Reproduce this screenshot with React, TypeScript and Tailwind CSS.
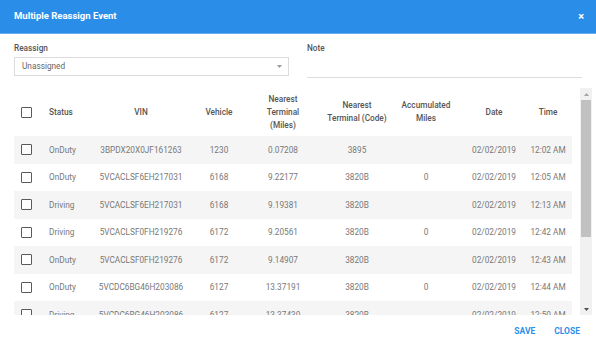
import React from "react";

type Row = {
  status: string;
  vin: string;
  vehicle: string;
  miles: string;
  code: string;
  acc: string;
  date: string;
  time: string;
};

const rows: Row[] = [
  { status: "OnDuty", vin: "3BPDX20X0JF161263", vehicle: "1230", miles: "0.07208", code: "3895", acc: "", date: "02/02/2019", time: "12:02 AM" },
  { status: "OnDuty", vin: "5VCACLSF6EH217031", vehicle: "6168", miles: "9.22177", code: "3820B", acc: "0", date: "02/02/2019", time: "12:05 AM" },
  { status: "Driving", vin: "5VCACLSF6EH217031", vehicle: "6168", miles: "9.19381", code: "3820B", acc: "", date: "02/02/2019", time: "12:13 AM" },
  { status: "Driving", vin: "5VCACLSF0FH219276", vehicle: "6172", miles: "9.20561", code: "3820B", acc: "0", date: "02/02/2019", time: "12:42 AM" },
  { status: "OnDuty", vin: "5VCACLSF0FH219276", vehicle: "6172", miles: "9.14907", code: "3820B", acc: "", date: "02/02/2019", time: "12:43 AM" },
  { status: "OnDuty", vin: "5VCDC6BG46H203086", vehicle: "6127", miles: "13.37191", code: "3820B", acc: "0", date: "02/02/2019", time: "12:44 AM" },
  { status: "Driving", vin: "5VCDC6BG46H203086", vehicle: "6127", miles: "13.37430", code: "3820B", acc: "", date: "02/02/2019", time: "12:50 AM" },
];

function Checkbox() {
  return <div className="w-[11px] h-[11px] border-[1.5px] border-[#5a5a5a] rounded-[1px] bg-white" />;
}

function Cells({ r, header }: { r?: Row; header?: boolean }) {
  const c = "flex justify-center items-center whitespace-nowrap";
  return (
    <>
      <div className="w-[24px] flex justify-center items-center">
        <Checkbox />
      </div>
      <div className="w-[58px] pl-[11px] flex items-center whitespace-nowrap">{header ? "Status" : r!.status}</div>
      <div className={`w-[90px] ${c}`}>{header ? "VIN" : r!.vin}</div>
      <div className={`w-[66px] ${c}`}>{header ? "Vehicle" : r!.vehicle}</div>
      <div className={`w-[62px] ${c}`}>
        {header ? (
          <div className="text-center leading-[13px]">
            Nearest
            <br />
            Terminal
            <br />
            (Miles)
          </div>
        ) : (
          r!.miles
        )}
      </div>
      <div className={`w-[86px] ${c}`}>
        {header ? (
          <div className="text-center leading-[13px]">
            Nearest
            <br />
            Terminal (Code)
          </div>
        ) : (
          r!.code
        )}
      </div>
      <div className={`w-[52px] ${c}`}>
        {header ? (
          <div className="text-center leading-[13px]">
            Accumulated
            <br />
            Miles
          </div>
        ) : (
          r!.acc
        )}
      </div>
      <div className={`w-[84px] ${c}`}>{header ? "Date" : r!.date}</div>
      <div className={`w-[24px] ${c}`}>{header ? "Time" : r!.time}</div>
    </>
  );
}

export default function App() {
  return (
    <div
      className="w-[596px] h-[348px] bg-white flex flex-col overflow-hidden"
      style={{ fontFamily: "Roboto, 'Noto Sans', sans-serif" }}
    >
      <div className="h-[34px] bg-[#2a8ee8] border-b border-[#64adf0] flex items-center justify-between pl-[14px] pr-[12px]">
        <span className="text-white font-bold text-[9.5px]">Multiple Reassign Event</span>
        <span className="text-white font-bold text-[11px] leading-none">×</span>
      </div>

      <div className="grid grid-cols-2 gap-[18px] px-[14px] pt-[8px]">
        <div className="flex flex-col">
          <div className="text-[8.25px] font-medium text-[#555] leading-[12px]">Reassign</div>
          <div className="mt-[3px] h-[19px] border border-[#dcdcdc] flex items-center justify-between pl-[7px] pr-[6px]">
            <span className="text-[8.25px] text-[#666]">Unassigned</span>
            <svg width="5" height="3" viewBox="0 0 5 3">
              <path d="M0 0 L5 0 L2.5 3 Z" fill="#999" />
            </svg>
          </div>
        </div>
        <div className="flex flex-col">
          <div className="text-[8.25px] font-medium text-[#555] leading-[12px]">Note</div>
          <div className="mt-[3px] h-[21px] border-b border-[#dcdcdc]" />
        </div>
      </div>

      <div className="mt-[10px] h-[227px] flex pl-[14px] pr-[4px] overflow-hidden">
        <div className="w-[558px] flex flex-col text-[8.25px]">
          <div className="h-[48px] shrink-0 flex font-medium text-[#555]">
            <Cells header />
          </div>
          {rows.map((r, i) => (
            <div
              key={i}
              className={`h-[27.5px] shrink-0 flex text-[#787878] ${i % 2 === 0 ? "bg-[#f5f5f5]" : "bg-white"}`}
            >
              <Cells r={r} />
            </div>
          ))}
        </div>
        <div className="ml-auto w-[12px] h-[227px] bg-[#f1f1f1] flex flex-col">
          <div className="h-[12px] flex items-center justify-center">
            <svg width="5" height="3" viewBox="0 0 5 3">
              <path d="M0 3 L5 3 L2.5 0 Z" fill="#a3a3a3" />
            </svg>
          </div>
          <div className="h-[137px] mx-[1px] bg-[#c1c1c1]" />
          <div className="flex-1" />
          <div className="h-[12px] flex items-center justify-center">
            <svg width="5" height="3" viewBox="0 0 5 3">
              <path d="M0 0 L5 0 L2.5 3 Z" fill="#505050" />
            </svg>
          </div>
        </div>
      </div>

      <div className="flex-1 flex items-center justify-end gap-[19px] pr-[16px]">
        <span className="text-[#2d8fea] font-bold text-[8.5px]">SAVE</span>
        <span className="text-[#2d8fea] font-bold text-[8.5px]">CLOSE</span>
      </div>
    </div>
  );
}
